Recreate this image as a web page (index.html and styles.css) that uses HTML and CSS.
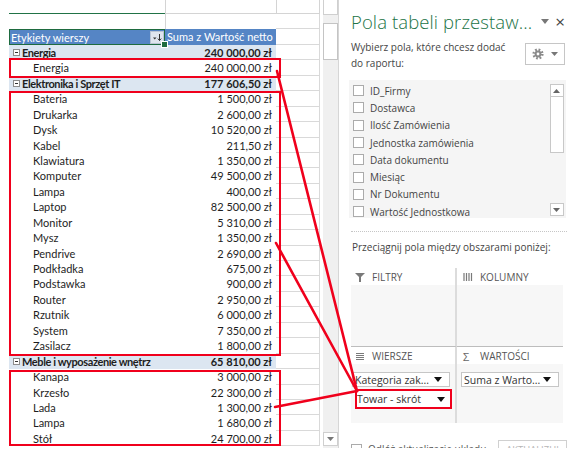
FILE: index.html
```html
<!DOCTYPE html>
<html lang="pl">
<head>
<meta charset="utf-8">
<title>Tabela przestawna</title>
<link rel="stylesheet" href="styles.css">
</head>
<body>
<div class="screen">
  <section class="sheet">
    <div class="row colhead"><div class="ca sel"></div><div class="cb"></div><div class="cc"></div></div>
    <div class="row blank"><div class="ca"></div><div class="cb"></div><div class="cc"></div></div>
    <div class="row hdr">
      <div class="ca active"><span>Etykiety wierszy</span><span class="fbtn"><svg width="11" height="9" viewBox="0 0 11 9"><path d="M1 4.5h3.5L2.75 6.5z" fill="#333"/><path d="M7.5 1v6.5M5.8 5.6l1.7 1.9 1.7-1.9" stroke="#333" stroke-width="1" fill="none"/></svg></span></div>
      <div class="cb">Suma z Wartość netto</div><div class="cc"></div>
    </div>

    <div class="row grp"><div class="ca"><i class="tog"></i>Energia</div><div class="cb">240 000,00 zł</div><div class="cc"></div></div>
    <div class="detail d1">
      <div class="row"><div class="ca">Energia</div><div class="cb">240 000,00 zł</div><div class="cc"></div></div>
    </div>

    <div class="row grp"><div class="ca"><i class="tog"></i>Elektronika i Sprzęt IT</div><div class="cb">177 606,50 zł</div><div class="cc"></div></div>
    <div class="detail d2">
      <div class="row"><div class="ca">Bateria</div><div class="cb">1 500,00 zł</div><div class="cc"></div></div>
      <div class="row"><div class="ca">Drukarka</div><div class="cb">2 600,00 zł</div><div class="cc"></div></div>
      <div class="row"><div class="ca">Dysk</div><div class="cb">10 520,00 zł</div><div class="cc"></div></div>
      <div class="row"><div class="ca">Kabel</div><div class="cb">211,50 zł</div><div class="cc"></div></div>
      <div class="row"><div class="ca">Klawiatura</div><div class="cb">1 350,00 zł</div><div class="cc"></div></div>
      <div class="row"><div class="ca">Komputer</div><div class="cb">49 500,00 zł</div><div class="cc"></div></div>
      <div class="row"><div class="ca">Lampa</div><div class="cb">400,00 zł</div><div class="cc"></div></div>
      <div class="row"><div class="ca">Laptop</div><div class="cb">82 500,00 zł</div><div class="cc"></div></div>
      <div class="row"><div class="ca">Monitor</div><div class="cb">5 310,00 zł</div><div class="cc"></div></div>
      <div class="row"><div class="ca">Mysz</div><div class="cb">1 350,00 zł</div><div class="cc"></div></div>
      <div class="row"><div class="ca">Pendrive</div><div class="cb">2 690,00 zł</div><div class="cc"></div></div>
      <div class="row"><div class="ca">Podkładka</div><div class="cb">675,00 zł</div><div class="cc"></div></div>
      <div class="row"><div class="ca">Podstawka</div><div class="cb">900,00 zł</div><div class="cc"></div></div>
      <div class="row"><div class="ca">Router</div><div class="cb">2 950,00 zł</div><div class="cc"></div></div>
      <div class="row"><div class="ca">Rzutnik</div><div class="cb">6 000,00 zł</div><div class="cc"></div></div>
      <div class="row"><div class="ca">System</div><div class="cb">7 350,00 zł</div><div class="cc"></div></div>
      <div class="row"><div class="ca">Zasilacz</div><div class="cb">1 800,00 zł</div><div class="cc"></div></div>
    </div>

    <div class="row grp"><div class="ca"><i class="tog"></i>Meble i wyposażenie wnętrz</div><div class="cb">65 810,00 zł</div><div class="cc"></div></div>
    <div class="detail d3">
      <div class="row"><div class="ca">Kanapa</div><div class="cb">3 000,00 zł</div><div class="cc"></div></div>
      <div class="row"><div class="ca">Krzesło</div><div class="cb">22 300,00 zł</div><div class="cc"></div></div>
      <div class="row"><div class="ca">Lada</div><div class="cb">1 300,00 zł</div><div class="cc"></div></div>
      <div class="row"><div class="ca">Lampa</div><div class="cb">1 680,00 zł</div><div class="cc"></div></div>
      <div class="row"><div class="ca">Stół</div><div class="cb">24 700,00 zł</div><div class="cc"></div></div>
    </div>
  </section>

  <div class="vscroll">
    <div class="sb-up"></div>
    <div class="sb-thumb"></div>
    <div class="sb-track"></div>
    <div class="sb-down"><svg width="7" height="4" viewBox="0 0 7 4"><path d="M0 0h7L3.5 4z" fill="#777"/></svg></div>
  </div>

  <aside class="panel">
    <div class="ptitle">
      <h1>Pola tabeli przestaw...</h1>
      <span class="pdrop"><svg width="8" height="5" viewBox="0 0 8 5"><path d="M0 0h8L4 5z" fill="#777"/></svg></span>
      <span class="pclose">×</span>
    </div>
    <div class="pintro">
      <p>Wybierz pola, które chcesz dodać<br>do raportu:</p>
      <div class="gear">
        <svg width="12" height="12" viewBox="0 0 12 12"><circle cx="6" cy="6" r="4.3" fill="none" stroke="#8a8a8a" stroke-width="2.6" stroke-dasharray="1.69 1.69"/><circle cx="6" cy="6" r="3.4" fill="#8a8a8a"/><circle cx="6" cy="6" r="1.4" fill="#fff"/></svg>
        <svg width="7" height="4" viewBox="0 0 7 4"><path d="M0 0h7L3.5 4z" fill="#777"/></svg>
      </div>
    </div>
    <div class="flist">
      <ul>
        <li><i class="cbx"></i>ID_Firmy</li>
        <li><i class="cbx"></i>Dostawca</li>
        <li><i class="cbx"></i>Ilość Zamówienia</li>
        <li><i class="cbx"></i>Jednostka zamówienia</li>
        <li><i class="cbx"></i>Data dokumentu</li>
        <li><i class="cbx"></i>Miesiąc</li>
        <li><i class="cbx"></i>Nr Dokumentu</li>
        <li><i class="cbx"></i>Wartość Jednostkowa</li>
      </ul>
      <div class="lscroll">
        <div class="ls-btn"><svg width="7" height="4" viewBox="0 0 7 4"><path d="M0 4h7L3.5 0z" fill="#666"/></svg></div>
        <div class="ls-thumb"></div>
        <div class="ls-track"></div>
        <div class="ls-btn"><svg width="7" height="4" viewBox="0 0 7 4"><path d="M0 0h7L3.5 4z" fill="#666"/></svg></div>
      </div>
    </div>
    <div class="sep"></div>
    <p class="drag">Przeciągnij pola między obszarami poniżej:</p>
    <div class="areas">
      <div class="area a-filt">
        <div class="ahead"><svg width="10" height="10" viewBox="0 0 10 10"><path d="M0 1h10L6 5v5H4V5z" fill="#7a7a7a"/></svg>FILTRY</div>
        <div class="abody"></div>
      </div>
      <div class="area a-cols">
        <div class="ahead"><svg width="10" height="10" viewBox="0 0 10 10"><path d="M1 1v8M3.5 1v8M6 1v8M8.5 1v8" stroke="#7a7a7a" stroke-width="1.2"/></svg>KOLUMNY</div>
        <div class="abody"></div>
      </div>
      <div class="area a-rows">
        <div class="ahead"><svg width="10" height="10" viewBox="0 0 10 10"><path d="M1 2.5h8M1 4.5h8M1 6.5h8M1 8.5h8" stroke="#7a7a7a" stroke-width="1"/></svg>WIERSZE</div>
        <div class="abody">
          <div class="pill">Kategoria zak...<svg width="8" height="5" viewBox="0 0 8 5"><path d="M0 0h8L4 5z" fill="#111"/></svg></div>
          <div class="pill hot">Towar - skrót<svg width="8" height="5" viewBox="0 0 8 5"><path d="M0 0h8L4 5z" fill="#111"/></svg></div>
        </div>
      </div>
      <div class="area a-vals">
        <div class="ahead"><span class="sigma">Σ</span>WARTOŚCI</div>
        <div class="abody">
          <div class="pill">Suma z Warto...<svg width="8" height="5" viewBox="0 0 8 5"><path d="M0 0h8L4 5z" fill="#111"/></svg></div>
        </div>
      </div>
    </div>
    <div class="pfoot">
      <label class="defer"><i class="cbx"></i>Odłóż aktualizację układu</label>
      <span class="upd">AKTUALIZUJ</span>
    </div>
  </aside>

  <svg class="annot" width="574" height="448" viewBox="0 0 574 448">
    <g stroke="#f0001c" stroke-width="2.6" stroke-linecap="round" fill="none">
      <line x1="277" y1="71" x2="357" y2="391"/>
      <line x1="276" y1="243" x2="357" y2="391"/>
      <line x1="275" y1="407" x2="357" y2="391"/>
    </g>
  </svg>
</div>
</body>
</html>
```

FILE: styles.css
```css
* { box-sizing: border-box; margin: 0; padding: 0; }

body {
  margin: 0;
  background: #fff;
  width: 574px;
  height: 462px;
  overflow: hidden;
}

.screen {
  position: relative;
  display: flex;
  height: 448px;
  overflow: hidden;
  background: #fff;
}

/* ---------- sheet ---------- */
.sheet {
  margin-left: 9px;
  width: 311px;
  flex: none;
  font-family: Lato, "Liberation Sans", sans-serif;
  font-size: 11px;
  color: #1e1e1e;
}

.row {
  display: grid;
  grid-template-columns: 156px 111px 44px;
  height: 15.44px;
  line-height: 15px;
  white-space: nowrap;
}

.row .cc {
  border-right: 1px solid #d9d9d9;
  border-bottom: 1px solid #d9d9d9;
}

.ca { padding-left: 24px; overflow: hidden; }
.cb { text-align: right; padding-right: 4px; }

.colhead { height: 14px; }
.colhead .ca { border-bottom: 1.5px solid #217346; }
.colhead .cb { border-bottom: 1px solid #d4d4d4; border-left: 1px solid #d4d4d4; }
.colhead .cc { border-bottom: 1px solid #d4d4d4; border-left: 1px solid #d4d4d4; border-right: 1px solid #d4d4d4; }

.blank .cb { border-left: 1px solid #d4d4d4; }

.hdr .ca, .hdr .cb {
  background: #5585c5;
  color: #fff;
}
.hdr .ca {
  position: relative;
  padding-left: 2px;
  display: flex;
  justify-content: space-between;
  align-items: center;
  outline: 1.5px solid #1e6b3f;
  outline-offset: -1px;
  z-index: 1;
  overflow: visible;
}
.hdr .ca::after {
  content: "";
  position: absolute;
  right: -3px;
  bottom: -3px;
  width: 5px;
  height: 5px;
  background: #1e6b3f;
  border: 1px solid #fff;
}
.hdr .cb { text-align: left; padding-left: 2px; }

.fbtn {
  display: flex;
  align-items: center;
  justify-content: center;
  width: 14px;
  height: 13px;
  margin-right: 1px;
  background: #dfe5ee;
  border: 1px solid #b9c4d4;
}

.grp { font-weight: 700; }
.grp .ca, .grp .cb { background: #dce6f1; }
.grp .ca {
  padding-left: 4px;
  display: flex;
  align-items: center;
  letter-spacing: -0.4px;
}

.tog {
  position: relative;
  width: 7px;
  height: 7px;
  border: 1px solid #8d8d8d;
  background: #fff;
  margin-right: 2px;
  flex: none;
}
.tog::after {
  content: "";
  position: absolute;
  left: 1px;
  top: 2px;
  width: 3px;
  height: 1px;
  background: #333;
}

.detail { position: relative; }
.detail::after {
  content: "";
  position: absolute;
  left: 0;
  width: 268px;
  top: 0;
  bottom: 0;
  border: 2.5px solid #f0001c;
  pointer-events: none;
}
.d1::after { top: -2px; bottom: -2px; }
.d2::after { top: 0; bottom: -2px; }
.d3::after { top: 1px; bottom: 0; }

/* ---------- sheet scrollbar ---------- */
.vscroll {
  width: 19px;
  flex: none;
  display: flex;
  flex-direction: column;
  padding-left: 3px;
  background: linear-gradient(to right, #fff 3px, #f0f0f0 3px);
  border-right: 1px solid #d6d6d6;
}
.sb-up {
  height: 15px;
  border: 1px solid #cfcfcf;
  border-top: none;
  background: #fff;
}
.sb-thumb {
  height: 37px;
  margin-top: 8px;
  border: 1px solid #c4c4c4;
  background: #fff;
}
.sb-track { flex: 1; }
.sb-down {
  height: 14px;
  margin-bottom: 2px;
  border: 1px solid #cfcfcf;
  background: #fff;
  display: flex;
  align-items: center;
  justify-content: center;
}

/* ---------- panel ---------- */
.panel {
  flex: 1;
  padding: 0 10px 0 12px;
  font-family: "Open Sans", "Noto Sans", sans-serif;
  font-size: 10px;
  color: #444;
}

.ptitle {
  height: 38px;
  display: flex;
  align-items: center;
  padding-top: 4px;
}
.ptitle h1 {
  font-weight: 300;
  font-size: 18.5px;
  color: #217346;
  letter-spacing: 0.1px;
  white-space: nowrap;
}
.pdrop { margin-left: 9px; display: flex; }
.pclose {
  margin-left: 6px;
  font-size: 17px;
  color: #444;
  line-height: 1;
}

.pintro {
  display: flex;
  justify-content: space-between;
  align-items: flex-start;
  height: 42px;
}
.pintro p { line-height: 16px; padding-top: 1px; }
.gear {
  margin-top: 5px;
  width: 40px;
  height: 22px;
  border: 1px solid #c6c6c6;
  display: flex;
  align-items: center;
  justify-content: center;
  gap: 7px;
}

.flist {
  display: flex;
  height: 138px;
  margin-left: -2px;
  margin-right: -1px;
  background: #f5f5f5;
  padding: 2px 2px 2px 4px;
}
.flist ul {
  flex: 1;
  list-style: none;
}
.flist li {
  height: 17.3px;
  display: flex;
  align-items: center;
  color: #444;
}
.cbx {
  width: 11px;
  height: 11px;
  border: 1px solid #ababab;
  background: #fff;
  margin-right: 6px;
  flex: none;
}

.lscroll {
  width: 14px;
  display: flex;
  flex-direction: column;
  margin-top: 2px;
}
.ls-btn {
  height: 13px;
  border: 1px solid #c8c8c8;
  background: #fff;
  display: flex;
  align-items: center;
  justify-content: center;
}
.ls-thumb {
  height: 56px;
  border: 1px solid #c8c8c8;
  border-top: none;
  background: #fff;
}
.ls-track { flex: 1; }

.sep {
  margin-top: 13px;
  border-top: 1px dotted #c6c6c6;
  margin-right: -2px;
}
.drag {
  line-height: 16px;
  margin-top: 7px;
  padding-left: 1px;
}

.areas {
  margin-top: 13px;
  display: grid;
  grid-template-columns: 106px 106px;
  grid-template-rows: 79px 76px;
}
.area { display: flex; flex-direction: column; }
.a-filt, .a-rows { border-right: 2px solid #dcdcdc; }
.a-filt, .a-cols { border-bottom: 1px solid #bdbdbd; }
.ahead {
  height: 17px;
  display: flex;
  align-items: center;
  gap: 7px;
  padding-left: 4px;
  padding-top: 1px;
  font-size: 10px;
  color: #555;
  background: #fff;
}
.a-cols .ahead, .a-vals .ahead { padding-left: 6px; }
.sigma { font-size: 11px; color: #666; width: 10px; }
.abody {
  flex: 1;
  background: #f7f7f7;
  padding-top: 7px;
}
.a-rows .abody { padding-top: 8px; }
.a-vals .abody { padding-top: 8px; padding-left: 3px; }

.pill {
  width: 98px;
  height: 15px;
  margin-left: 1px;
  padding: 0 7px 0 2px;
  background: #fff;
  border: 1px solid #c6c6c6;
  display: flex;
  align-items: center;
  justify-content: space-between;
  font-size: 10.5px;
  color: #333;
  white-space: nowrap;
}
.pill.hot {
  margin-left: 4px;
  margin-top: 2px;
  width: 97px;
  height: 20px;
  padding-left: 2px;
  border: none;
  background: #fff;
  outline: 2.5px solid #f0001c;
  outline-offset: -2.5px;
}

.pfoot {
  margin-top: 17px;
  display: flex;
  align-items: flex-start;
  justify-content: space-between;
}
.defer {
  display: flex;
  align-items: center;
  color: #555;
  padding-top: 2px;
}
.defer .cbx { margin-right: 6px; }
.upd {
  width: 69px;
  height: 22px;
  border: 1px solid #d0d0d0;
  color: #b5b5b5;
  font-size: 9.5px;
  text-align: center;
  line-height: 18px;
  margin-right: -2px;
}

/* ---------- annotation lines ---------- */
.annot {
  position: absolute;
  left: 0;
  top: 0;
  pointer-events: none;
}
```
